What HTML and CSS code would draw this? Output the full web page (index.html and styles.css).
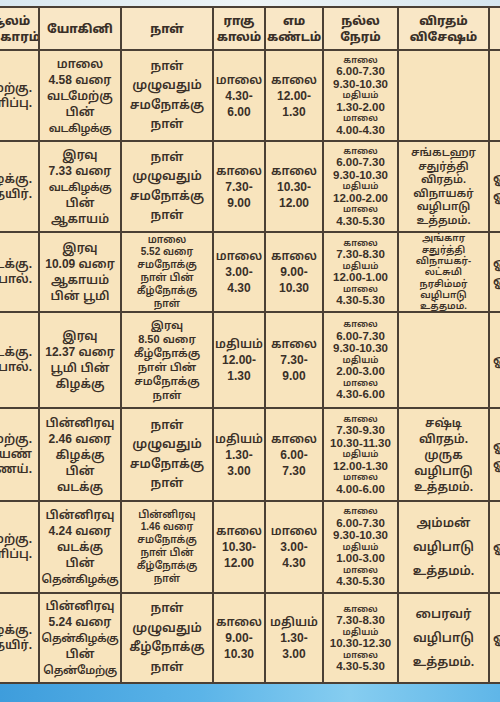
FILE: index.html
```html
<!DOCTYPE html>
<html lang="ta">
<head>
<meta charset="utf-8">
<link rel="stylesheet" href="styles.css">
</head>
<body>
<div class="page">
  <div class="sky"></div>
  <div class="table">
    <div class="c h"><span>சூலம்</span><span>பரிகாரம்</span></div>
    <div class="c h"><span>யோகினி</span></div>
    <div class="c h"><span>நாள்</span></div>
    <div class="c h"><span>ராகு</span><span>காலம்</span></div>
    <div class="c h"><span>எம</span><span>கண்டம்</span></div>
    <div class="c h"><span>நல்ல</span><span>நேரம்</span></div>
    <div class="c h"><span>விரதம்</span><span>விசேஷம்</span></div>
    <div class="c h"></div>

    <!-- row 1 -->
    <div class="c s"><span>மேற்கு.</span><span>புளிப்பு.</span></div>
    <div class="c y"><span>மாலை</span><span>4.58 வரை</span><span>வடமேற்கு</span><span>பின்</span><span class="k">வடகிழக்கு</span></div>
    <div class="c d"><span>நாள்</span><span>முழுவதும்</span><span>சமநோக்கு</span><span>நாள்</span></div>
    <div class="c y"><span>மாலை</span><span>4.30-</span><span>6.00</span></div>
    <div class="c y"><span>காலை</span><span>12.00-</span><span>1.30</span></div>
    <div class="c n"><span class="w">காலை</span><span>6.00-7.30</span><span>9.30-10.30</span><span class="w">மதியம்</span><span>1.30-2.00</span><span class="w">மாலை</span><span>4.00-4.30</span></div>
    <div class="c v"></div>
    <div class="c x"></div>

    <!-- row 2 -->
    <div class="c s"><span>கிழக்கு.</span><span>தயிர்.</span></div>
    <div class="c y"><span>இரவு</span><span>7.33 வரை</span><span class="k">வடகிழக்கு</span><span>பின்</span><span>ஆகாயம்</span></div>
    <div class="c d"><span>நாள்</span><span>முழுவதும்</span><span>சமநோக்கு</span><span>நாள்</span></div>
    <div class="c y"><span>காலை</span><span>7.30-</span><span>9.00</span></div>
    <div class="c y"><span>காலை</span><span>10.30-</span><span>12.00</span></div>
    <div class="c n"><span class="w">காலை</span><span>6.00-7.30</span><span>9.30-10.30</span><span class="w">மதியம்</span><span>12.00-2.00</span><span class="w">மாலை</span><span>4.30-5.30</span></div>
    <div class="c v"><span>சங்கடஹர</span><span>சதுர்த்தி</span><span>விரதம்.</span><span>விநாயகர்</span><span>வழிபாடு</span><span>உத்தமம்.</span></div>
    <div class="c x"><span>ஓ</span><span>ஓ</span></div>

    <!-- row 3 -->
    <div class="c s"><span>வடக்கு.</span><span>பால்.</span></div>
    <div class="c y"><span>இரவு</span><span>10.09 வரை</span><span>ஆகாயம்</span><span>பின் பூமி</span></div>
    <div class="c ys"><span>மாலை</span><span>5.52 வரை</span><span>சமநோக்கு</span><span>நாள் பின்</span><span>கீழ்நோக்கு</span><span>நாள்</span></div>
    <div class="c y"><span>மாலை</span><span>3.00-</span><span>4.30</span></div>
    <div class="c y"><span>காலை</span><span>9.00-</span><span>10.30</span></div>
    <div class="c n"><span class="w">காலை</span><span>7.30-8.30</span><span class="w">மதியம்</span><span>12.00-1.00</span><span class="w">மாலை</span><span>4.30-5.30</span></div>
    <div class="c vs"><span>அங்கார</span><span>சதுர்த்தி</span><span>விநாயகர்-</span><span>லட்சுமி</span><span>நரசிம்மர்</span><span>வழிபாடு</span><span>உத்தமம்.</span></div>
    <div class="c x"><span>ஓ</span><span>ஓ</span></div>

    <!-- row 4 -->
    <div class="c s"><span>வடக்கு.</span><span>பால்.</span></div>
    <div class="c y"><span>இரவு</span><span>12.37 வரை</span><span>பூமி பின்</span><span>கிழக்கு</span></div>
    <div class="c ym"><span>இரவு</span><span>8.50 வரை</span><span>கீழ்நோக்கு</span><span>நாள் பின்</span><span>சமநோக்கு</span><span>நாள்</span></div>
    <div class="c y"><span>மதியம்</span><span>12.00-</span><span>1.30</span></div>
    <div class="c y"><span>காலை</span><span>7.30-</span><span>9.00</span></div>
    <div class="c n"><span class="w">காலை</span><span>6.00-7.30</span><span>9.30-10.30</span><span class="w">மதியம்</span><span>2.00-3.00</span><span class="w">மாலை</span><span>4.30-6.00</span></div>
    <div class="c v"></div>
    <div class="c x"><span>ஓ</span></div>

    <!-- row 5 -->
    <div class="c s"><span>மேற்கு.</span><span>தேங்காயெண்</span><span>எண்ணெய்.</span></div>
    <div class="c y"><span>பின்னிரவு</span><span>2.46 வரை</span><span>கிழக்கு</span><span>பின்</span><span>வடக்கு</span></div>
    <div class="c d"><span>நாள்</span><span>முழுவதும்</span><span>சமநோக்கு</span><span>நாள்</span></div>
    <div class="c y"><span>மதியம்</span><span>1.30-</span><span>3.00</span></div>
    <div class="c y"><span>காலை</span><span>6.00-</span><span>7.30</span></div>
    <div class="c n"><span class="w">காலை</span><span>7.30-9.30</span><span>10.30-11.30</span><span class="w">மதியம்</span><span>12.00-1.30</span><span class="w">மாலை</span><span>4.00-6.00</span></div>
    <div class="c v v5"><span>சஷ்டி</span><span>விரதம்.</span><span>முருக</span><span>வழிபாடு</span><span>உத்தமம்.</span></div>
    <div class="c x"><span>ஓ</span><span>ஓ</span></div>

    <!-- row 6 -->
    <div class="c s"><span>மேற்கு.</span><span>புளிப்பு.</span></div>
    <div class="c y"><span>பின்னிரவு</span><span>4.24 வரை</span><span>வடக்கு</span><span>பின்</span><span class="k">தென்கிழக்கு</span></div>
    <div class="c ys"><span>பின்னிரவு</span><span>1.46 வரை</span><span>சமநோக்கு</span><span>நாள் பின்</span><span>கீழ்நோக்கு</span><span>நாள்</span></div>
    <div class="c y"><span>காலை</span><span>10.30-</span><span>12.00</span></div>
    <div class="c y"><span>மாலை</span><span>3.00-</span><span>4.30</span></div>
    <div class="c n"><span class="w">காலை</span><span>6.00-7.30</span><span>9.30-10.30</span><span class="w">மதியம்</span><span>1.00-3.00</span><span class="w">மாலை</span><span>4.30-5.30</span></div>
    <div class="c v sp"><span>அம்மன்</span><span>வழிபாடு</span><span>உத்தமம்.</span></div>
    <div class="c x"><span>ஓ</span></div>

    <!-- row 7 -->
    <div class="c s"><span>கிழக்கு.</span><span>தயிர்.</span></div>
    <div class="c y"><span>பின்னிரவு</span><span>5.24 வரை</span><span class="k">தென்கிழக்கு</span><span>பின்</span><span class="k">தென்மேற்கு</span></div>
    <div class="c d"><span>நாள்</span><span>முழுவதும்</span><span>கீழ்நோக்கு</span><span>நாள்</span></div>
    <div class="c y"><span>காலை</span><span>9.00-</span><span>10.30</span></div>
    <div class="c y"><span>மதியம்</span><span>1.30-</span><span>3.00</span></div>
    <div class="c n"><span class="w">காலை</span><span>7.30-8.30</span><span class="w">மதியம்</span><span>10.30-12.30</span><span class="w">மாலை</span><span>4.30-5.30</span></div>
    <div class="c v sp"><span>பைரவர்</span><span>வழிபாடு</span><span>உத்தமம்.</span></div>
    <div class="c x"><span>ஓ</span></div>
  </div>
  <div class="sea"></div>
</div>
</body>
</html>
```
FILE: styles.css
```css
html, body {
  margin: 0;
  padding: 0;
  width: 500px;
  height: 702px;
  overflow: hidden;
  background: #4aa6e0;
}
.page {
  width: 500px;
  height: 702px;
  overflow: hidden;
  display: flex;
  flex-direction: column;
  font-family: "Liberation Sans", "Noto Sans Tamil", "Lohit Tamil", "Noto Sans", sans-serif;
  font-weight: 600;
  color: #3a3028;
}
.sky {
  height: 6px;
  flex: none;
  background: linear-gradient(90deg, #d9e8f0, #eef4f6 50%, #d6e6ef);
}
.table {
  flex: none;
  margin-left: -22px;
  width: 600px;
  padding: 2px;
  background: #4b4035;
  display: grid;
  grid-template-columns: 58px 80px 90px 50px 56px 73px 89px 70px;
  grid-template-rows: 41px 89px 89px 78px 94px 91px 90px 88px;
  gap: 2px;
}
.c {
  background: #f8e4bd;
  display: flex;
  flex-direction: column;
  align-items: center;
  justify-content: center;
  text-align: center;
  white-space: nowrap;
  overflow: hidden;
}
.h {
  background: #f9e7c6;
  font-size: 12px;
  font-weight: 800;
  line-height: 16px;
}
.s {
  font-size: 12px;
  line-height: 15px;
  align-items: flex-end;
  padding-right: 6px;
}
.y {
  font-size: 12px;
  line-height: 16px;
}
.k {
  font-size: 11px;
  letter-spacing: -0.4px;
}
.d {
  font-size: 12.5px;
  line-height: 19.5px;
}
.ym {
  font-size: 11px;
  line-height: 14px;
}
.ys {
  font-size: 10px;
  line-height: 12.8px;
}
.n {
  font-size: 11.5px;
  line-height: 12.5px;
}
.n .w {
  font-size: 9px;
  line-height: 10.5px;
}
.v {
  font-size: 11px;
  line-height: 13.5px;
}
.v.v5 {
  font-size: 12px;
  line-height: 16px;
}
.v.sp {
  font-size: 12.5px;
  line-height: 24px;
}
.vs {
  font-size: 9.5px;
  line-height: 11.3px;
}
.x {
  font-size: 13px;
  line-height: 18px;
  align-items: flex-start;
  padding-left: 3px;
}
.sea {
  flex: 1;
  background: linear-gradient(90deg, #3e9ddc 0%, #5bb4e8 40%, #86cdf0 70%, #5fb6e8 100%);
}
```
